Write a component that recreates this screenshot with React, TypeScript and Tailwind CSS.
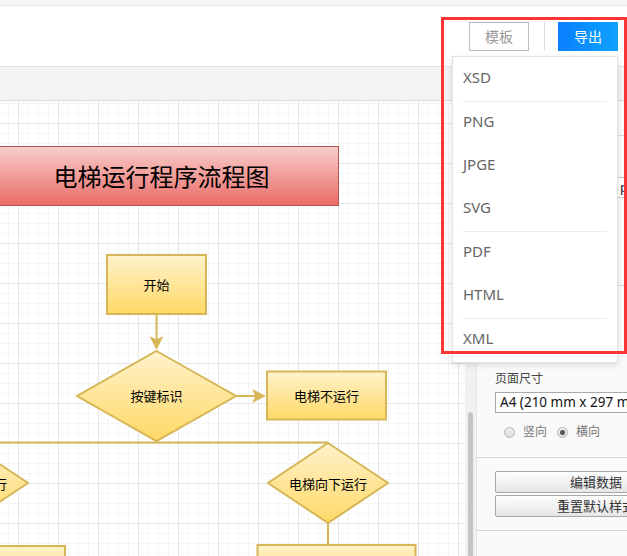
import * as React from "react"

const formats = [
  { name: "XSD", sep: false },
  { name: "PNG", sep: true },
  { name: "JPGE", sep: false },
  { name: "SVG", sep: false },
  { name: "PDF", sep: true },
  { name: "HTML", sep: false },
  { name: "XML", sep: true },
]

const Y = "#d6b656"

const Diagram = () => (
  <svg width="465" height="455" className="block">
    <defs>
      <pattern id="grid" x="18" y="3" width="40" height="40" patternUnits="userSpaceOnUse">
        <rect x="10" y="0" width="1" height="40" fill="#f5f5f5" />
        <rect x="20" y="0" width="1" height="40" fill="#f5f5f5" />
        <rect x="30" y="0" width="1" height="40" fill="#f5f5f5" />
        <rect x="0" y="10" width="40" height="1" fill="#f5f5f5" />
        <rect x="0" y="20" width="40" height="1" fill="#f5f5f5" />
        <rect x="0" y="30" width="40" height="1" fill="#f5f5f5" />
        <rect x="0" y="0" width="1" height="40" fill="#e6e6e6" />
        <rect x="0" y="0" width="40" height="1" fill="#e6e6e6" />
      </pattern>
      <linearGradient id="yel" x1="0" y1="0" x2="0" y2="1">
        <stop offset="0" stopColor="#fff2cc" />
        <stop offset="1" stopColor="#ffd966" />
      </linearGradient>
      <linearGradient id="red" x1="0" y1="0" x2="0" y2="1">
        <stop offset="0" stopColor="#f8cecc" />
        <stop offset="1" stopColor="#ea6b66" />
      </linearGradient>
    </defs>
    <g transform="translate(0,-101)">
      <rect x="0" y="101" width="465" height="455" fill="url(#grid)" />

      {/* title */}
      <rect x="-16.5" y="146.5" width="355" height="59" fill="url(#red)" stroke="#b85450" strokeWidth="1" />
      <text x="161.5" y="175.5" fontSize="24" textAnchor="middle" dominantBaseline="central" fill="#000" fontFamily="Noto Sans CJK SC, sans-serif">电梯运行程序流程图</text>

      {/* start */}
      <rect x="107" y="255" width="99" height="59" fill="url(#yel)" stroke={Y} strokeWidth="2" />
      <line x1="156.5" y1="314" x2="156.5" y2="342" stroke={Y} strokeWidth="2" />
      <path d="M150.5,337 L156.5,349 L162.5,337 L156.5,340 Z" fill={Y} stroke={Y} strokeWidth="1" />

      {/* decision */}
      <polygon points="156.5,351 236,396 156.5,441 77,396" fill="url(#yel)" stroke={Y} strokeWidth="2" />
      <line x1="236" y1="396" x2="258" y2="396" stroke={Y} strokeWidth="2" />
      <path d="M253,390 L265,396 L253,402 L256,396 Z" fill={Y} stroke={Y} strokeWidth="1" />
      <rect x="267" y="371.5" width="119" height="48" fill="url(#yel)" stroke={Y} strokeWidth="2" />

      {/* branch */}
      <line x1="-32" y1="442.5" x2="328" y2="442.5" stroke={Y} strokeWidth="2" />
      <polygon points="328,443 388,483 328,523 268,483" fill="url(#yel)" stroke={Y} strokeWidth="2" />
      <polygon points="-32,443 28,483 -32,523 -92,483" fill="url(#yel)" stroke={Y} strokeWidth="2" />
      <line x1="328" y1="523" x2="328" y2="545" stroke={Y} strokeWidth="2" />
      <rect x="257.5" y="545" width="158" height="40" fill="url(#yel)" stroke={Y} strokeWidth="2" />
      <rect x="-93" y="546" width="158" height="40" fill="url(#yel)" stroke={Y} strokeWidth="2" />

      <g fontSize="13" textAnchor="middle" dominantBaseline="central" fill="#000" fontFamily="Noto Sans CJK SC, sans-serif">
        <text x="156.5" y="284">开始</text>
        <text x="156.5" y="395">按键标识</text>
        <text x="326.5" y="395">电梯不运行</text>
        <text x="328" y="483">电梯向下运行</text>
        <text x="-32" y="483">电梯向上运行</text>
      </g>
    </g>
  </svg>
)

const Radio = ({ checked }: { checked?: boolean }) => (
  <span className="w-[11px] h-[11px] rounded-full border border-[#b5b5b5] bg-gradient-to-b from-[#f0f0f0] to-[#dcdcdc] flex items-center justify-center">
    {checked && <span className="w-[5px] h-[5px] rounded-full bg-[#555]" />}
  </span>
)

export default function App() {
  return (
    <div className="relative w-[627px] h-[556px] overflow-hidden bg-white flex flex-col font-['Noto_Sans','Noto_Sans_CJK_SC',sans-serif]">
      <div className="h-[6px] shrink-0 bg-[#f5f5f5] border-b border-[#e6e6e6]" />

      <header className="h-[61px] shrink-0 border-b border-[#e2e2e2] flex items-center justify-end pr-[9px]">
        <button className="w-[60px] h-[29px] border border-[#bcbcbc] text-[#999] text-[14px] flex items-center justify-center">
          模板
        </button>
        <div className="w-px h-[30px] bg-[#dedede] ml-[15px]" />
        <button className="w-[60px] h-[29px] ml-[13px] bg-gradient-to-r from-[#0a7ffc] to-[#11a2ff] text-white text-[14px] flex items-center justify-center">
          导出
        </button>
      </header>

      <div className="h-[34px] shrink-0 bg-[#f3f3f3] border-b border-[#d9d9d9]" />

      <div className="flex flex-1 min-h-0">
        <div className="w-[465px] shrink-0 overflow-hidden">
          <Diagram />
        </div>
        <div className="w-[11px] shrink-0 bg-[#f1f1f1] flex flex-col">
          <div className="h-[311px] shrink-0" />
          <div className="flex-1 mx-[3px] rounded-t-[3px] bg-[#c4c4c4]" />
        </div>
        <aside className="w-[240px] shrink-0 bg-[#fafafa] border-l border-[#e4e4e4] flex flex-col">
          <div className="h-[35px] shrink-0 border-b border-[#dcdcdc]" />
          <div className="h-[150px] shrink-0 border-b border-[#dcdcdc] pt-[41px]">
            <div className="ml-[124px] h-[21px] border border-[#c8c8c8] bg-white text-[13px] text-[#1a1a40] leading-[19px] pl-[18px]">
              pt
            </div>
          </div>
          <div className="h-[172px] shrink-0 border-b border-[#d6d6d6] pl-[18px] pt-[84px]">
            <div className="text-[12px] leading-[18px] text-[#444]">页面尺寸</div>
            <div className="mt-[4px] w-[202px] h-[21px] border border-[#a9a9a9] bg-white text-[13.5px] leading-[19px] text-[#111] pl-[4px] whitespace-nowrap overflow-hidden">
              A4 (210 mm x 297 mm)
            </div>
            <div className="mt-[11px] h-[16px] flex items-center pl-[9px] text-[12px] text-[#777]">
              <Radio />
              <span className="ml-[8px]">竖向</span>
              <span className="ml-[10px]"><Radio checked /></span>
              <span className="ml-[8px]">横向</span>
            </div>
          </div>
          <div className="h-[73px] shrink-0 border-b border-[#d6d6d6] pl-[18px] pt-[13px] flex flex-col gap-[2px]">
            <button className="w-[202px] h-[22px] border border-[#a8a8a8] rounded-[2px] bg-gradient-to-b from-[#fdfdfd] to-[#e6e6e6] text-[13px] text-[#333] leading-none">
              编辑数据
            </button>
            <button className="w-[202px] h-[22px] border border-[#a8a8a8] rounded-[2px] bg-gradient-to-b from-[#fdfdfd] to-[#e6e6e6] text-[13px] text-[#333] leading-none">
              重置默认样式
            </button>
          </div>
        </aside>
      </div>

      <div className="absolute left-[452px] top-[56px] w-[166px] bg-white border border-[#e2e2e2] shadow-[0_2px_6px_rgba(0,0,0,0.12)]">
        {formats.map((f) => (
          <div key={f.name} className="h-[43.5px] px-[10px]">
            <div className={`h-full flex items-center pb-[4px] text-[15px] text-[#666] ${f.sep ? "border-t border-[#ececec]" : ""}`}>
              {f.name}
            </div>
          </div>
        ))}
      </div>

      <div className="absolute left-[441px] top-[17px] w-[186px] h-[337px] border-[3px] border-[#fa3535] pointer-events-none" />
    </div>
  )
}
